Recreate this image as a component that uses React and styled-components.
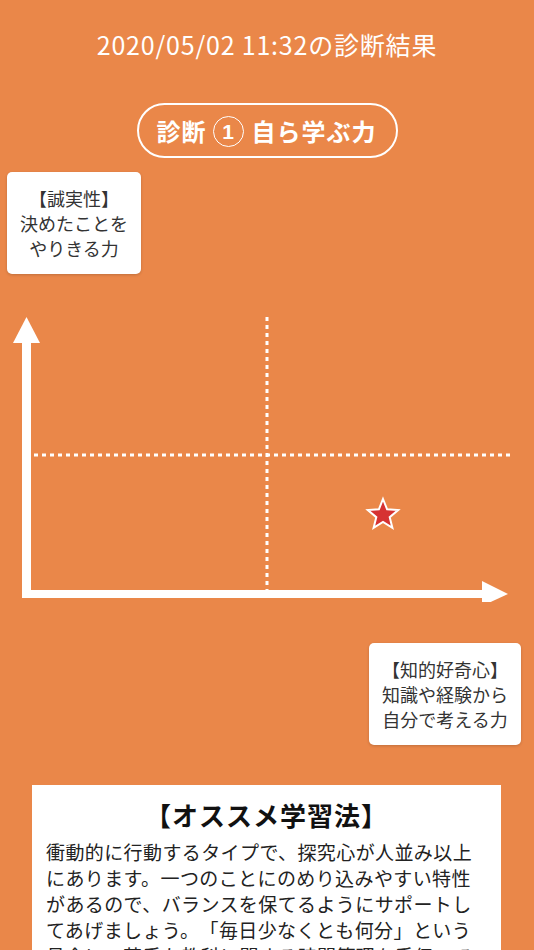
import React from "react";
import styled, { createGlobalStyle } from "styled-components";

const ORANGE = "#EA8749";

const GlobalStyle = createGlobalStyle`
  body {
    margin: 0;
    background: ${ORANGE};
    font-family: "Noto Sans CJK JP", "Noto Sans", sans-serif;
    text-spacing-trim: space-all;
  }
`;

const Page = styled.div`
  min-height: 100vh;
  background: ${ORANGE};
  display: flex;
  flex-direction: column;
  overflow: hidden;
`;

const Title = styled.h1`
  margin: 0;
  padding-top: 30px;
  font-size: 25px;
  line-height: 28px;
  font-weight: 400;
  color: #fff;
  text-align: center;
  letter-spacing: 0.8px;
`;

const Pill = styled.div`
  align-self: center;
  margin-top: 45px;
  box-sizing: border-box;
  height: 55px;
  padding: 0 19px 0 18px;
  border: 2.5px solid #fff;
  border-radius: 28px;
  display: flex;
  align-items: center;
  color: #fff;
  font-size: 24px;
  font-weight: 700;
  letter-spacing: 1px;
`;

const Circled = styled.span`
  box-sizing: border-box;
  width: 31px;
  height: 31px;
  margin: 2px 8px 0 6px;
  border: 1.5px solid #fff;
  border-radius: 50%;
  display: flex;
  align-items: center;
  justify-content: center;
  font-size: 21px;
  font-weight: 700;
  font-family: "Liberation Sans", sans-serif;
  letter-spacing: 0;
`;

const Label = styled.div`
  align-self: ${(p) => (p.$right ? "flex-end" : "flex-start")};
  margin: ${(p) => (p.$right ? "41px 13px 0 0" : "14px 0 0 7px")};
  padding: 14px 13px 13px;
  background: #fff;
  border-radius: 5px;
  box-shadow: 0 1px 3px rgba(0, 0, 0, 0.18);
  color: #333;
  font-size: 18px;
  line-height: 25px;
  text-align: center;
`;

const Chart = styled.svg`
  display: block;
  margin-top: 28px;
  width: 534px;
  height: 300px;
`;

const Card = styled.div`
  margin: 40px 33px 0 32px;
  padding: 12px 14px 20px;
  background: #fff;
`;

const CardTitle = styled.h2`
  margin: 0;
  font-size: 26px;
  line-height: 36px;
  font-weight: 700;
  color: #111;
  text-align: center;
  letter-spacing: 1px;
`;

const CardBody = styled.p`
  margin: 6px 0 0;
  font-size: 19px;
  line-height: 26px;
  letter-spacing: 0.4px;
  color: #222;
`;

const starPoints = (cx, cy, R, r) => {
  const pts = [];
  for (let i = 0; i < 10; i++) {
    const rad = i % 2 === 0 ? R : r;
    const a = (Math.PI / 5) * i - Math.PI / 2;
    pts.push(`${(cx + rad * Math.cos(a)).toFixed(1)},${(cy + rad * Math.sin(a)).toFixed(1)}`);
  }
  return pts.join(" ");
};

const AxisChart = () => (
  <Chart viewBox="0 0 534 300">
    {/* dotted guides */}
    <line x1="267" y1="15" x2="267" y2="288" stroke="#fff" strokeWidth="3" strokeDasharray="4 4" />
    <line x1="34" y1="153" x2="510" y2="153" stroke="#fff" strokeWidth="3" strokeDasharray="4 4" />
    {/* axes */}
    <rect x="22" y="40" width="9" height="256" fill="#fff" />
    <polygon points="26.5,15 13,41 40,41" fill="#fff" />
    <rect x="22" y="288" width="461" height="8" fill="#fff" />
    <polygon points="482,279 508,292 482,304" fill="#fff" />
    {/* result */}
    <polygon
      points={starPoints(383, 213, 16, 7)}
      fill="#D63232"
      stroke="#fff"
      strokeWidth="2"
      strokeLinejoin="miter"
    />
  </Chart>
);

export default function App() {
  return (
    <>
      <GlobalStyle />
      <Page>
        <Title>2020/05/02 11:32の診断結果</Title>
        <Pill>
          診断<Circled>1</Circled>自ら学ぶ力
        </Pill>
        <Label>
          【誠実性】
          <br />
          決めたことを
          <br />
          やりきる力
        </Label>
        <AxisChart />
        <Label $right>
          【知的好奇心】
          <br />
          知識や経験から
          <br />
          自分で考える力
        </Label>
        <Card>
          <CardTitle>【オススメ学習法】</CardTitle>
          <CardBody>
            衝動的に行動するタイプで、探究心が人並み以上にあります。一つのことにのめり込みやすい特性があるので、バランスを保てるようにサポートしてあげましょう。「毎日少なくとも何分」という具合に、苦手な教科に関する時間管理を手伝ってあげると良いでしょう。
          </CardBody>
        </Card>
      </Page>
    </>
  );
}
